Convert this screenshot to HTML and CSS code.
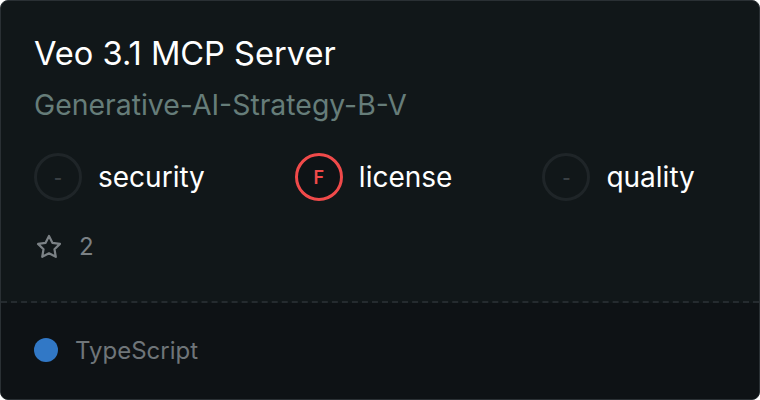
FILE: index.html
```html
<!DOCTYPE html>
<html>
<head>
<meta charset="utf-8">
<link rel="stylesheet" href="styles.css">
</head>
<body>
<div class="card">
  <div class="main">
    <h1 class="title">Veo 3.1 MCP Server</h1>
    <div class="owner">Generative-AI-Strategy-B-V</div>
    <div class="scores">
      <div class="score"><span class="badge empty">-</span><span class="label">security</span></div>
      <div class="score"><span class="badge fail">F</span><span class="label">license</span></div>
      <div class="score"><span class="badge empty">-</span><span class="label">quality</span></div>
    </div>
    <div class="stars">
      <svg class="star" viewBox="0 0 24 24" width="28" height="28"><path d="M12 2.5l2.9 5.9 6.5.95-4.7 4.58 1.1 6.47L12 17.35l-5.8 3.05 1.1-6.47-4.7-4.58 6.5-.95z" fill="none" stroke="currentColor" stroke-width="1.9" stroke-linejoin="round"/></svg>
      <span class="count">2</span>
    </div>
  </div>
  <div class="footer">
    <span class="dot"></span><span class="lang">TypeScript</span>
  </div>
</div>
</body>
</html>
```
FILE: styles.css
```css
html, body {
  margin: 0;
  padding: 0;
  background: #ffffff;
}
body {
  font-family: Inter, "Noto Sans", sans-serif;
  width: 760px;
  height: 400px;
}
.card {
  box-sizing: border-box;
  width: 760px;
  height: 400px;
  border: 1px solid #2a3034;
  border-radius: 8px;
  background: #111719;
  overflow: hidden;
  display: flex;
  flex-direction: column;
}
.main {
  padding: 32px 33px 0 33px;
  height: 302px;
  box-sizing: border-box;
  border-bottom: 2px dashed #252b2f;
}
.title {
  margin: 0;
  font-weight: 400;
  font-size: 32.6px;
  line-height: 40px;
  color: #ffffff;
}
.owner {
  margin-top: 15px;
  font-size: 28.4px;
  line-height: 34px;
  color: #667d79;
}
.scores {
  margin-top: 31px;
  display: flex;
  gap: 90px;
  align-items: center;
}
.score {
  display: flex;
  align-items: center;
  gap: 16px;
}
.badge {
  box-sizing: border-box;
  width: 48px;
  height: 48px;
  border-radius: 50%;
  display: flex;
  align-items: center;
  justify-content: center;
  font-size: 18px;
  font-weight: 600;
}
.badge.empty {
  border: 3px solid #1f2528;
  color: #3a4044;
}
.badge.fail {
  border: 3px solid #f04a4a;
  color: #f04a4a;
  background: #0e1316;
}
.label {
  font-size: 28px;
  line-height: 34px;
  color: #ffffff;
}
.stars {
  margin-top: 31px;
  display: flex;
  align-items: center;
  gap: 16px;
  color: #7b8185;
  padding-left: 1px;
}
.count {
  font-size: 24px;
  line-height: 30px;
  color: #7b8185;
}
.footer {
  flex: 1;
  background: #0e1215;
  display: flex;
  align-items: center;
  padding: 0 33px 2px 33px;
  gap: 17px;
}
.dot {
  width: 24px;
  height: 24px;
  border-radius: 50%;
  background: #3178c6;
}
.lang {
  font-size: 24px;
  color: #6f7579;
}
```
